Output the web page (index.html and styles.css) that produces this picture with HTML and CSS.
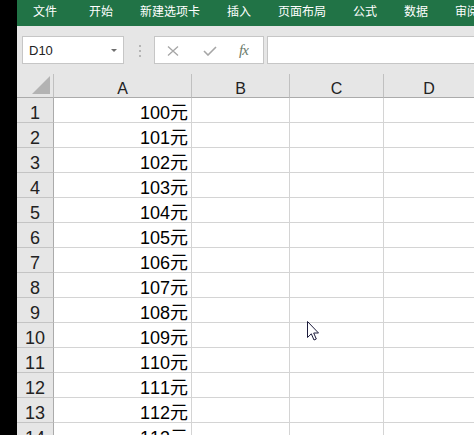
FILE: index.html
```html
<!DOCTYPE html>
<html lang="zh-CN">
<head>
<meta charset="utf-8">
<title>Excel</title>
<link rel="stylesheet" href="styles.css">
</head>
<body>
<div class="app">
  <div class="strip"></div>
  <div class="main">
    <div class="ribbon">
      <span class="tab first">文件</span>
      <span class="tab">开始</span>
      <span class="tab">新建选项卡</span>
      <span class="tab">插入</span>
      <span class="tab">页面布局</span>
      <span class="tab">公式</span>
      <span class="tab">数据</span>
      <span class="tab">审阅</span>
    </div>
    <div class="fbar">
      <div class="namebox"><span class="nametext">D10</span><span class="dd"></span></div>
      <div class="dots"><i></i><i></i><i></i></div>
      <div class="btns">
        <svg class="ico x" width="12" height="10" viewBox="0 0 12 10"><path d="M1 0.5 L11 9.5 M11 0.5 L1 9.5" stroke="#a6a6a6" stroke-width="1.3" fill="none"/></svg>
        <svg class="ico ok" width="14" height="10" viewBox="0 0 14 10"><path d="M1 5 L5 9 L13 1" stroke="#a6a6a6" stroke-width="1.6" fill="none"/></svg>
        <span class="fx">fx</span>
      </div>
      <div class="finput"></div>
    </div>
    <div class="grid">
      <div class="corner"><svg width="18" height="18" viewBox="0 0 18 18"><polygon points="0,18 18,18 18,0" fill="#b3b3b3"/></svg></div>
      <div class="ch">A</div><div class="ch">B</div><div class="ch">C</div><div class="ch last">D</div>
      <div class="rh">1</div><div class="c">100元</div><div class="c"></div><div class="c"></div><div class="c"></div>
      <div class="rh">2</div><div class="c">101元</div><div class="c"></div><div class="c"></div><div class="c"></div>
      <div class="rh">3</div><div class="c">102元</div><div class="c"></div><div class="c"></div><div class="c"></div>
      <div class="rh">4</div><div class="c">103元</div><div class="c"></div><div class="c"></div><div class="c"></div>
      <div class="rh">5</div><div class="c">104元</div><div class="c"></div><div class="c"></div><div class="c"></div>
      <div class="rh">6</div><div class="c">105元</div><div class="c"></div><div class="c"></div><div class="c"></div>
      <div class="rh">7</div><div class="c">106元</div><div class="c"></div><div class="c"></div><div class="c"></div>
      <div class="rh">8</div><div class="c">107元</div><div class="c"></div><div class="c"></div><div class="c"></div>
      <div class="rh">9</div><div class="c">108元</div><div class="c"></div><div class="c"></div><div class="c"></div>
      <div class="rh">10</div><div class="c">109元</div><div class="c"></div><div class="c"></div><div class="c"></div>
      <div class="rh">11</div><div class="c">110元</div><div class="c"></div><div class="c"></div><div class="c"></div>
      <div class="rh">12</div><div class="c">111元</div><div class="c"></div><div class="c"></div><div class="c"></div>
      <div class="rh">13</div><div class="c">112元</div><div class="c"></div><div class="c"></div><div class="c"></div>
      <div class="rh">14</div><div class="c">113元</div><div class="c"></div><div class="c"></div><div class="c"></div>
    </div>
    <svg class="cursor" width="13" height="21" viewBox="0 0 13 21"><path d="M0.5 0.5 L0.5 16.5 L4.3 12.8 L7 19 L9.3 18 L6.7 12 L11.5 12 Z" fill="#fff" stroke="#1c1c3c" stroke-width="1"/></svg>
  </div>
</div>
</body>
</html>
```
FILE: styles.css
```css
html, body {
  margin: 0;
  padding: 0;
  background: #000;
}
.app {
  display: flex;
  width: 474px;
  height: 435px;
  overflow: hidden;
  font-family: "Liberation Sans", Arial, "Noto Sans CJK SC", sans-serif;
  font-kerning: none;
}
.strip {
  width: 17px;
  flex: none;
  background: #000;
}
.main {
  flex: 1;
  min-width: 0;
  background: #fff;
  display: flex;
  flex-direction: column;
  position: relative;
  overflow: hidden;
}
.ribbon {
  height: 26px;
  flex: none;
  background: #217346;
  display: flex;
  gap: 27px;
  padding-left: 16px;
  color: #fff;
  font-family: "Noto Sans CJK SC", sans-serif;
  font-size: 12px;
  line-height: 21px;
  white-space: nowrap;
}
.tab.first {
  margin-right: 5px;
}
.fbar {
  height: 48px;
  flex: none;
  box-sizing: border-box;
  background: #e6e6e6;
  display: flex;
  align-items: flex-start;
  padding: 10px 0 0 5px;
}
.namebox {
  width: 102px;
  height: 28px;
  box-sizing: border-box;
  border: 1px solid #c6c6c6;
  background: #fff;
  display: flex;
  align-items: center;
  padding: 0 6px 0 6px;
  font-size: 13px;
  color: #222;
}
.nametext {
  flex: 1;
}
.dd {
  width: 0;
  height: 0;
  border-left: 3px solid transparent;
  border-right: 3px solid transparent;
  border-top: 3px solid #6f6f6f;
}
.dots {
  width: 3px;
  height: 12px;
  margin: 9px 13px 0 14px;
  display: flex;
  flex-direction: column;
  justify-content: space-between;
  align-items: center;
}
.dots i {
  display: block;
  width: 2px;
  height: 2px;
  background: #b5b5b5;
}
.btns {
  width: 110px;
  height: 28px;
  box-sizing: border-box;
  border: 1px solid #c6c6c6;
  background: #fff;
  display: flex;
  align-items: center;
  padding-left: 12px;
}
.ico.x {
  margin-top: 1px;
}
.ico.ok {
  margin-left: 24px;
  margin-top: 1px;
}
.fx {
  margin-left: 22px;
  font-family: "Liberation Serif", serif;
  font-style: italic;
  font-size: 15px;
  color: #6a7a6a;
  letter-spacing: -1px;
}
.finput {
  flex: 1;
  height: 28px;
  box-sizing: border-box;
  margin-left: 3px;
  border: 1px solid #c6c6c6;
  border-right: none;
  background: #fff;
}
.grid {
  display: grid;
  grid-template-columns: 37px 138px 98px 94px 1fr;
  grid-template-rows: 24px;
  grid-auto-rows: 25px;
}
.corner, .ch {
  background: #e6e6e6;
  border-bottom: 1px solid #ababab;
  box-sizing: border-box;
  height: 24px;
}
.corner {
  border-right: 1px solid #c0c0c0;
  display: flex;
  justify-content: flex-end;
  align-items: flex-end;
  padding: 0 3px 3px 0;
}
.corner svg {
  display: block;
}
.ch {
  border-right: 1px solid #c0c0c0;
  text-align: center;
  font-size: 16px;
  line-height: 29px;
  color: #222;
  overflow: hidden;
}
.ch.last {
  border-right: none;
}
.rh {
  background: #e6e6e6;
  border-right: 1px solid #ababab;
  border-bottom: 1px solid #c4c4c4;
  box-sizing: border-box;
  text-align: center;
  font-size: 18px;
  line-height: 30px;
  height: 25px;
  color: #222;
  overflow: hidden;
}
.c {
  border-right: 1px solid #d4d4d4;
  border-bottom: 1px solid #d4d4d4;
  box-sizing: border-box;
  height: 25px;
  text-align: right;
  padding-right: 3px;
  font-size: 18px;
  line-height: 30px;
  color: #000;
  overflow: hidden;
  white-space: nowrap;
}
.c:nth-child(5n) {
  border-right: none;
}
.cursor {
  position: absolute;
  left: 290px;
  top: 321px;
}
```
